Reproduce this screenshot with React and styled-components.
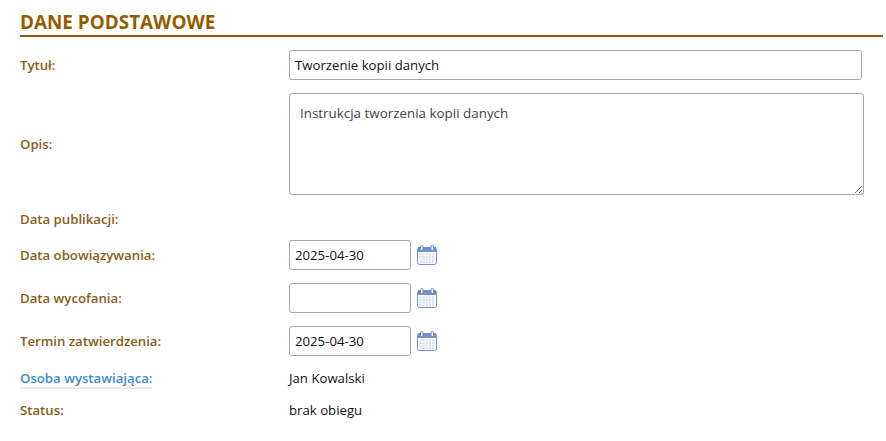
import React from "react";
import styled, { createGlobalStyle } from "styled-components";

const GlobalStyle = createGlobalStyle`
    html, body {
        margin: 0;
        padding: 0;
        background: #fff;
    }
    body {
        font-family: "Open Sans", "Liberation Sans", sans-serif;
        font-size: 13.2px;
        color: #111;
    }
`;

const CalendarIcon = () => (
    <svg width="22" height="22" viewBox="0 0 22 22">
        <rect x="1.5" y="3.5" width="19" height="17" rx="2" fill="#fff" stroke="#7290cc" />
        <path d="M2 3h18v5H2z" fill="#7290cc" />
        <g fill="#d8dff2">
            {[0, 1, 2, 3].map((r) =>
                [0, 1, 2, 3, 4].map((c) => (
                    <rect key={`${r}-${c}`} x={3.5 + c * 3.1} y={9.4 + r * 2.6} width="2.2" height="2" />
                ))
            )}
        </g>
        <rect x="4.5" y="1.5" width="2.5" height="5" rx="1.2" fill="#fff" stroke="#6484c4" />
        <rect x="15" y="1.5" width="2.5" height="5" rx="1.2" fill="#fff" stroke="#6484c4" />
    </svg>
);

const DateField = ({ value }) => (
    <DateWrap>
        <DateInput type="text" defaultValue={value} readOnly />
        <CalendarIcon />
    </DateWrap>
);

const App = () => {
    return (
        <>
            <GlobalStyle />
            <Page>
                <Heading>Dane podstawowe</Heading>
                <Form>
                    <Label>Tytuł:</Label>
                    <TextInput type="text" defaultValue="Tworzenie kopii danych" readOnly />

                    <Label>Opis:</Label>
                    <TextArea defaultValue="Instrukcja tworzenia kopii danych" readOnly />

                    <LowLabel>Data publikacji:</LowLabel>
                    <Value />

                    <Label>Data obowiązywania:</Label>
                    <DateField value="2025-04-30" />

                    <Label>Data wycofania:</Label>
                    <DateField value="" />

                    <Label>Termin zatwierdzenia:</Label>
                    <DateField value="2025-04-30" />

                    <Label><HelpLabel>Osoba wystawiająca:</HelpLabel></Label>
                    <Value>Jan Kowalski</Value>

                    <Label>Status:</Label>
                    <Value>brak obiegu</Value>
                </Form>
            </Page>
        </>
    );
};

const Page = styled.div`
    width: 863px;
    padding: 10px 3px 0 20px;
`;

const Heading = styled.h2`
    margin: 0 0 13px;
    height: 25px;
    line-height: 25px;
    font-size: 18.9px;
    font-weight: 700;
    text-transform: uppercase;
    color: #945c00;
    border-bottom: 2px solid #945c00;
`;

const Form = styled.div`
    display: grid;
    grid-template-columns: 269px 1fr;
    row-gap: 13px;
    align-items: center;
`;

const Label = styled.div`
    font-weight: 600;
    font-size: 13.2px;
    line-height: 19px;
    color: #8a5d1c;
`;

const LowLabel = styled(Label)`
    margin: 2px 0 -2px;
`;

const HelpLabel = styled.span`
    color: #3d8bcd;
    border-bottom: 2px solid #eaeaea;
`;

const Value = styled.div`
    min-height: 19px;
    line-height: 19px;
    font-size: 13.2px;
`;

const TextInput = styled.input`
    box-sizing: border-box;
    width: 573px;
    height: 30px;
    padding: 0 5px;
    border: 1px solid #a9a9a9;
    border-radius: 3px;
    font-family: inherit;
    font-size: 13.2px;
    color: #111;
    outline: none;
`;

const TextArea = styled.textarea`
    display: block;
    box-sizing: border-box;
    width: 575px;
    height: 102px;
    padding: 10px;
    border: 1px solid #a9a9a9;
    border-radius: 3px;
    font-family: inherit;
    font-size: 13.4px;
    line-height: 18px;
    color: #444;
    outline: none;
    resize: both;
`;

const DateWrap = styled.div`
    display: flex;
    align-items: center;
    gap: 5px;
`;

const DateInput = styled(TextInput)`
    width: 122px;
`;

export default App;
